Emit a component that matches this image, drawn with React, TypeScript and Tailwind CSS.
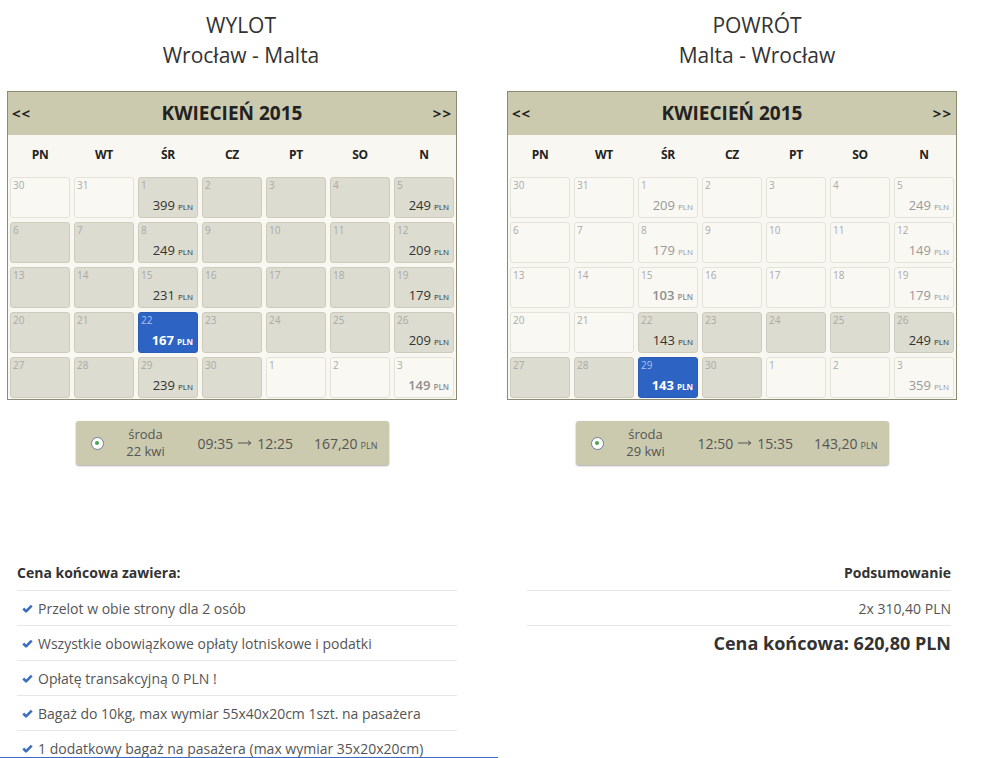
type Tone = 'past' | 'open' | 'selected';
type PriceKind = 'dark' | 'muted' | 'low' | 'selected';

type Day = {
  n: number;
  tone: Tone;
  price?: number;
  kind?: PriceKind;
};

const g = (n: number, price?: number): Day => ({ n, tone: 'open', price, kind: 'dark' });
const l = (n: number, price?: number, kind: PriceKind = 'muted'): Day => ({ n, tone: 'past', price, kind });
const s = (n: number, price: number): Day => ({ n, tone: 'selected', price, kind: 'selected' });

const WEEKDAYS = ['PN', 'WT', 'ŚR', 'CZ', 'PT', 'SO', 'N'];

const outbound: Day[] = [
  l(30), l(31), g(1, 399), g(2), g(3), g(4), g(5, 249),
  g(6), g(7), g(8, 249), g(9), g(10), g(11), g(12, 209),
  g(13), g(14), g(15, 231), g(16), g(17), g(18), g(19, 179),
  g(20), g(21), s(22, 167), g(23), g(24), g(25), g(26, 209),
  g(27), g(28), g(29, 239), g(30), l(1), l(2), l(3, 149, 'low'),
];

const inbound: Day[] = [
  l(30), l(31), l(1, 209), l(2), l(3), l(4), l(5, 249),
  l(6), l(7), l(8, 179), l(9), l(10), l(11), l(12, 149),
  l(13), l(14), l(15, 103, 'low'), l(16), l(17), l(18), l(19, 179),
  l(20), l(21), g(22, 143), g(23), g(24), g(25), g(26, 249),
  g(27), g(28), s(29, 143), g(30), l(1), l(2), l(3, 359),
];

const cellTone: Record<Tone, string> = {
  past: 'bg-[#f9f8f3] border-[#e4e3da]',
  open: 'bg-[#dddcd0] border-[#cdccbc]',
  selected: 'bg-[#2d63c3] border-[#2a5bb5]',
};

const priceTone: Record<PriceKind, string> = {
  dark: 'text-[#333]',
  muted: 'text-[#999]',
  low: 'text-[#8f8f8f] font-semibold',
  selected: 'text-white font-bold',
};

function DayCell({ day }: { day: Day }) {
  return (
    <div className={`flex h-[41px] flex-col rounded-[3px] border px-[2px] ${cellTone[day.tone]}`}>
      <span
        className={`text-[10px] leading-[14px] ${day.tone === 'selected' ? 'text-[#a9c1ee]' : 'text-[#aaa]'}`}
      >
        {day.n}
      </span>
      {day.price !== undefined && (
        <span className={`mt-[4px] pr-[2px] text-right text-[13px] leading-[18px] ${priceTone[day.kind ?? 'dark']}`}>
          {day.price}
          <span className="ml-[3px] text-[8px]">PLN</span>
        </span>
      )}
    </div>
  );
}

function Calendar({ days }: { days: Day[] }) {
  return (
    <div className="w-[450px] border border-[#8c8b74] bg-[#f8f7f1]">
      <div className="flex h-[43px] items-center justify-between bg-[#cbcaae] px-[4px] text-[#222]">
        <span className="text-[15px] font-bold tracking-[1px]">&lt;&lt;</span>
        <span className="text-[19px] font-bold">KWIECIEŃ 2015</span>
        <span className="text-[15px] font-bold tracking-[1px]">&gt;&gt;</span>
      </div>
      <div className="grid h-[40px] grid-cols-7 items-center gap-[4px] px-[2px]">
        {WEEKDAYS.map((d) => (
          <span key={d} className="text-center text-[12px] font-bold tracking-tight text-[#222]">
            {d}
          </span>
        ))}
      </div>
      <div className="mt-[2px] grid grid-cols-7 gap-[4px] px-[2px] pb-[1px]">
        {days.map((day, i) => (
          <DayCell key={i} day={day} />
        ))}
      </div>
    </div>
  );
}

function FlightBar({ date, from, to, price }: { date: string; from: string; to: string; price: string }) {
  return (
    <div className="mx-auto mt-[21px] flex h-[44px] w-[313px] items-center rounded-[3px] bg-[#cbcaae] pl-[15px] text-[14px] text-[#555] shadow-[0_1px_2px_rgba(0,0,0,0.35)]">
      <span className="flex h-[13px] w-[13px] shrink-0 items-center justify-center rounded-full border border-[#6f8296] bg-white">
        <span className="h-[4px] w-[4px] rounded-full bg-[#4aa34a]" />
      </span>
      <div className="ml-[7px] w-[70px] text-center text-[13px] leading-[17px]">
        <div>środa</div>
        <div>{date}</div>
      </div>
      <span className="ml-[17px] flex items-center whitespace-nowrap">
        {from}
        <svg viewBox="0 0 14 6" className="mx-[5px] h-[6px] w-[14px]">
          <path d="M0 3 H12.5 M10 0.8 L13 3 L10 5.2" fill="none" stroke="#555" strokeWidth="1" />
        </svg>
        {to}
      </span>
      <span className="ml-[21px] whitespace-nowrap">
        {price}
        <span className="ml-[3px] text-[9px]">PLN</span>
      </span>
    </div>
  );
}

function Check() {
  return (
    <svg viewBox="0 0 12 10" className="mr-[5px] ml-[5px] h-[9px] w-[11px] shrink-0">
      <path d="M1.3 5 L4.4 8.2 L10.7 1.7" fill="none" stroke="#3a6cc2" strokeWidth="2.8" strokeLinejoin="round" />
    </svg>
  );
}

const included = [
  'Przelot w obie strony dla 2 osób',
  'Wszystkie obowiązkowe opłaty lotniskowe i podatki',
  'Opłatę transakcyjną 0 PLN !',
  'Bagaż do 10kg, max wymiar 55x40x20cm 1szt. na pasażera',
  '1 dodatkowy bagaż na pasażera (max wymiar 35x20x20cm)',
];

export default function App() {
  return (
    <div className="relative h-[758px] overflow-hidden bg-white font-['Open_Sans',sans-serif]">
      <div className="flex gap-[50px] pl-[7px]">
        <div className="w-[450px]">
          <div className="pt-[10px] pl-[18px] text-center text-[21px] leading-[30px] text-[#333]">
            <div>WYLOT</div>
            <div>Wrocław - Malta</div>
          </div>
          <div className="mt-[21px]">
            <Calendar days={outbound} />
          </div>
          <FlightBar date="22 kwi" from="09:35" to="12:25" price="167,20" />
        </div>
        <div className="w-[450px]">
          <div className="pt-[10px] pl-[50px] text-center text-[21px] leading-[30px] text-[#333]">
            <div>POWRÓT</div>
            <div>Malta - Wrocław</div>
          </div>
          <div className="mt-[21px]">
            <Calendar days={inbound} />
          </div>
          <FlightBar date="29 kwi" from="12:50" to="15:35" price="143,20" />
        </div>
      </div>

      <div className="mt-[89px] flex pl-[17px] text-[14px]">
        <div className="w-[440px]">
          <div className="flex h-[37px] items-center border-b border-[#e6e6e6] font-bold text-[#333]">
            Cena końcowa zawiera:
          </div>
          {included.map((item) => (
            <div key={item} className="flex h-[35px] items-center border-b border-[#e6e6e6] text-[#555]">
              <Check />
              <span>{item}</span>
            </div>
          ))}
        </div>
        <div className="ml-[70px] w-[424px] text-right">
          <div className="flex h-[37px] items-center justify-end border-b border-[#e6e6e6] font-bold text-[#333]">
            Podsumowanie
          </div>
          <div className="flex h-[35px] items-center justify-end border-b border-[#e6e6e6] text-[#555]">
            2x 310,40 PLN
          </div>
          <div className="flex h-[35px] items-center justify-end text-[18px] font-bold text-[#333]">
            Cena końcowa: 620,80 PLN
          </div>
        </div>
      </div>

      <div className="absolute bottom-0 left-0 h-px w-[498px] bg-[#3b6cc0]" />
    </div>
  );
}
